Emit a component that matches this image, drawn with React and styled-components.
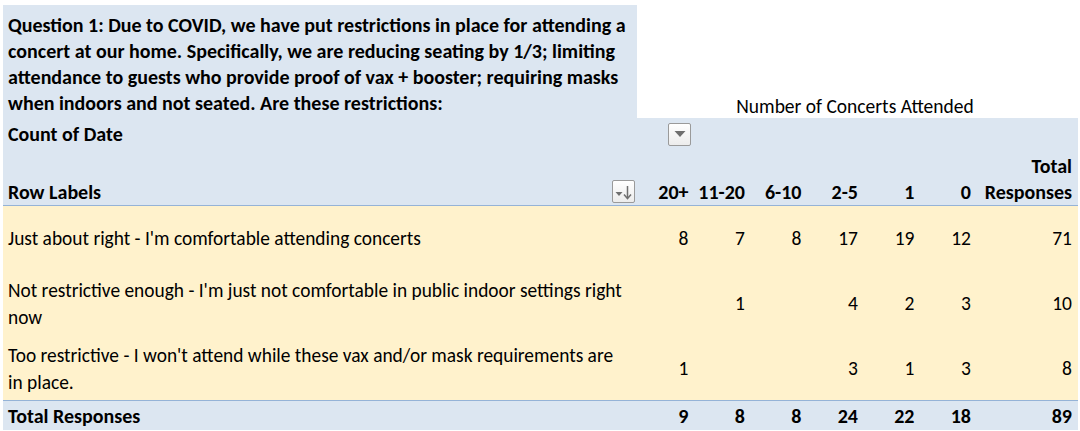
import React from 'react'
import styled, { createGlobalStyle } from 'styled-components'

const GlobalStyle = createGlobalStyle`
    body {
        margin: 0;
        background: #ffffff;
        font-family: Carlito, "Liberation Sans Narrow", "Open Sans", sans-serif;
        color: #000000;
    }
`

const BLUE = '#dce6f1'
const LINE = '#95b3d7'
const YELLOW = '#fff2cc'

const columns = ['20+', '11-20', '6-10', '2-5', '1', '0']

const rows = [
    {
        label: ["Just about right - I'm comfortable attending concerts"],
        values: [8, 7, 8, 17, 19, 12],
        total: 71,
        height: 64,
    },
    {
        label: ["Not restrictive enough - I'm just not comfortable in public indoor settings right", 'now'],
        values: ['', 1, '', 4, 2, 3],
        total: 10,
        height: 67,
    },
    {
        label: ["Too restrictive - I won't attend while these vax and/or mask requirements are", 'in place.'],
        values: [1, '', '', 3, 1, 3],
        total: 8,
        height: 63,
    },
]

const totals = [9, 8, 8, 24, 22, 18]

const title = [
    'Question 1: Due to COVID, we have put restrictions in place for attending a',
    'concert at our home. Specifically, we are reducing seating by 1/3; limiting',
    'attendance to guests who provide proof of vax + booster; requiring masks',
    'when indoors and not seated. Are these restrictions:',
]

function FilterButton({ sort }) {
    return (
        <Button $sort={sort}>
            {sort ? (
                <svg width="19" height="15" viewBox="0 0 19 15">
                    <path d="M1.5 7 L8.5 7 L5 11 Z" fill="#6f6f6f" />
                    <path d="M13.5 1 L13.5 13" stroke="#6f6f6f" strokeWidth="1.5" />
                    <path d="M10 9.5 L13.5 13.5 L17 9.5" stroke="#6f6f6f" strokeWidth="1.5" fill="none" />
                </svg>
            ) : (
                <svg width="12" height="8" viewBox="0 0 12 8">
                    <path d="M0.5 1 L11.5 1 L6 7 Z" fill="#6f6f6f" />
                </svg>
            )}
        </Button>
    )
}

function App() {
    return (
        <>
            <GlobalStyle />
            <Sheet>
                <TopRow>
                    <Title>
                        {title.map((line) => (
                            <div key={line}>{line}</div>
                        ))}
                    </Title>
                    <ColumnCaption>Number of Concerts Attended</ColumnCaption>
                </TopRow>
                <HeaderBlock>
                    <CountRow>
                        <LabelCell $bold>Count of Date</LabelCell>
                        <FilterButton />
                    </CountRow>
                    <HeaderRow>
                        <LabelCell $bold>
                            Row Labels
                            <FilterButton sort />
                        </LabelCell>
                        {columns.map((c) => (
                            <NumCell key={c} $bold>{c}</NumCell>
                        ))}
                        <NumCell $bold>
                            Total
                            <br />
                            Responses
                        </NumCell>
                    </HeaderRow>
                </HeaderBlock>
                <Body>
                    {rows.map((r, i) => (
                        <DataRow key={i} $height={r.height}>
                            <LabelCell>
                                {r.label.map((l) => (
                                    <div key={l}>{l}</div>
                                ))}
                            </LabelCell>
                            {r.values.map((v, j) => (
                                <NumCell key={j}>{v}</NumCell>
                            ))}
                            <NumCell>{r.total}</NumCell>
                        </DataRow>
                    ))}
                </Body>
                <TotalRow>
                    <LabelCell $bold>Total Responses</LabelCell>
                    {totals.map((t, j) => (
                        <NumCell key={j} $bold>{t}</NumCell>
                    ))}
                    <NumCell $bold>89</NumCell>
                </TotalRow>
            </Sheet>
        </>
    )
}

const Sheet = styled.div`
    width: 1075px;
    padding: 5px 0 0 3px;
    font-size: 20px;
`

const TopRow = styled.div`
    display: flex;
`

const Title = styled.div`
    width: 634px;
    background: ${BLUE};
    padding: 7px 5px 2px;
    box-sizing: border-box;
    font-weight: 700;
    line-height: 26px;
    white-space: nowrap;
    overflow: hidden;
`

const ColumnCaption = styled.div`
    flex: 1;
    display: flex;
    align-items: flex-end;
    justify-content: center;
    padding: 0 5px 0 0;
    font-size: 19.5px;
    line-height: 24px;
`

const HeaderBlock = styled.div`
    background: ${BLUE};
    border-bottom: 1px solid ${LINE};
`

const grid = `
    display: grid;
    grid-template-columns: 635px repeat(6, 56.5px) 101px;
`

const CountRow = styled.div`
    height: 32px;
    display: flex;
    align-items: center;
    > button {
        margin-left: 30px;
    }
`

const HeaderRow = styled.div`
    ${grid}
    height: 55px;
    align-items: end;
    line-height: 26px;
`

const LabelCell = styled.div`
    width: 635px;
    box-sizing: border-box;
    padding: 0 5px;
    font-weight: ${(p) => (p.$bold ? 700 : 400)};
    font-size: ${(p) => (p.$bold ? '20px' : '19.4px')};
    white-space: nowrap;
    display: flex;
    flex-direction: column;
    justify-content: center;
    position: relative;
    > button {
        position: absolute;
        right: 3px;
        bottom: 2px;
    }
`

const NumCell = styled.div`
    text-align: right;
    padding-right: 6px;
    font-weight: ${(p) => (p.$bold ? 700 : 400)};
    font-size: ${(p) => (p.$bold ? '20px' : '19.5px')};
    white-space: nowrap;
`

const Body = styled.div`
    background: ${YELLOW};
`

const DataRow = styled.div`
    ${grid}
    height: ${(p) => p.$height}px;
    align-items: center;
    line-height: 27px;
`

const TotalRow = styled.div`
    ${grid}
    background: ${BLUE};
    border-top: 1px solid ${LINE};
    height: 29px;
    align-items: center;
`

const Button = styled.button`
    width: 23px;
    height: 23px;
    padding: 0;
    border: 1px solid #9a9a9a;
    border-radius: 2px;
    background: linear-gradient(#ffffff, #ececec);
    display: flex;
    align-items: center;
    justify-content: center;
    padding-top: ${(p) => (p.$sort ? '2px' : '0')};
`

export default App
